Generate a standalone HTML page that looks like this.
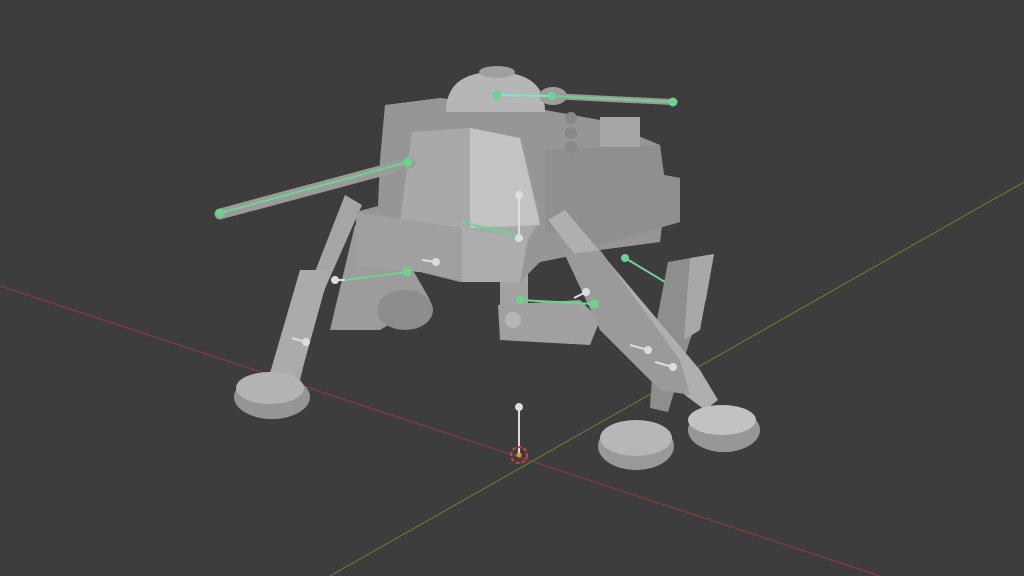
<!DOCTYPE html>
<html><head><style>
html,body{margin:0;padding:0;background:#3d3d3d;}
svg{display:block}
</style></head><body>
<svg width="1024" height="576" viewBox="0 0 1024 576" xmlns="http://www.w3.org/2000/svg">
<rect width="1024" height="576" fill="#3d3d3d"/>
<line x1="0" y1="286" x2="880" y2="576" stroke="#8a3b3e" stroke-width="1.2"/>
<line x1="330" y1="576" x2="1024" y2="182" stroke="#5f7a33" stroke-width="1.2"/>
<!-- back right fin -->
<polygon points="668,262 714,254 706,300 690,340 668,412 650,408 655,330" fill="#8e8e8e"/>
<polygon points="690,258 714,254 700,330 684,340" fill="#a8a8a8"/>
<!-- back right foot -->
<ellipse cx="636" cy="446" rx="38" ry="24" fill="#999"/>
<ellipse cx="636" cy="438" rx="36" ry="18" fill="#b7b7b7"/>
<!-- center leg -->
<rect x="500" y="235" width="28" height="90" fill="#a3a3a3"/>
<!-- left leg -->
<polygon points="345,195 362,205 320,300 300,380 280,385 300,310" fill="#a6a6a6"/>
<polygon points="355,225 390,230 430,300 380,330 330,330" fill="#9c9c9c"/>
<ellipse cx="405" cy="310" rx="28" ry="20" fill="#8d8d8d"/>
<polygon points="300,270 330,270 305,360 290,385 268,380" fill="#ababab"/>
<ellipse cx="272" cy="397" rx="38" ry="22" fill="#959595"/>
<ellipse cx="270" cy="388" rx="34" ry="16" fill="#b4b4b4"/>
<!-- main body -->
<polygon points="385,105 440,98 545,110 600,120 660,145 664,175 680,178 680,222 662,226 660,242 600,250 540,262 520,282 460,282 420,272 356,266 356,212 378,206 380,160" fill="#969696"/>
<polygon points="412,132 470,128 520,138 540,220 528,240 462,228 400,220" fill="#a9a9a9"/>
<polygon points="470,128 520,138 540,225 470,228" fill="#c3c3c3"/>
<polygon points="356,212 462,228 462,280 420,272 356,266" fill="#a0a0a0"/>
<polygon points="462,228 528,240 520,282 462,282" fill="#adadad"/>
<polygon points="545,150 660,145 664,175 680,178 680,222 600,245 545,230" fill="#8f8f8f"/>
<rect x="600" y="117" width="40" height="30" fill="#a7a7a7"/>
<!-- dome -->
<path d="M446,112 Q446,72 495,72 Q545,72 545,112 Z" fill="#b6b6b6"/>
<ellipse cx="497" cy="72" rx="18" ry="6" fill="#a0a0a0"/>
<ellipse cx="553" cy="96" rx="14" ry="9" fill="#9d9d9d"/>
<circle cx="571" cy="118" r="6" fill="#888"/><circle cx="571" cy="133" r="6" fill="#888"/><circle cx="571" cy="147" r="6" fill="#888"/>
<!-- gun barrels -->
<line x1="220" y1="214" x2="410" y2="163" stroke="#9a9a9a" stroke-width="11" stroke-linecap="round"/>
<line x1="550" y1="96" x2="673" y2="102" stroke="#9a9a9a" stroke-width="6"/>
<!-- hip block -->
<polygon points="498,305 580,300 600,320 590,345 500,340" fill="#a0a0a0"/>
<circle cx="513" cy="320" r="8" fill="#b5b5b5"/>
<!-- right front leg -->
<polygon points="548,220 565,210 700,370 718,400 705,410 685,395" fill="#afafaf"/>
<polygon points="565,255 600,250 680,360 690,395 660,390 600,330" fill="#9a9a9a"/>
<ellipse cx="724" cy="430" rx="36" ry="22" fill="#979797"/>
<ellipse cx="722" cy="420" rx="34" ry="15" fill="#c2c2c2"/>
<!-- green bones -->
<g stroke="#6ed38f" stroke-width="2" fill="#6ed38f">
<line x1="220" y1="213" x2="408" y2="162"/>
<line x1="497" y1="95" x2="550" y2="96" stroke="#7fe3d0"/>
<line x1="552" y1="96" x2="673" y2="102"/>
<line x1="462" y1="222" x2="519" y2="236"/>
<line x1="345" y1="280" x2="407" y2="272"/>
<line x1="625" y1="258" x2="665" y2="282"/>
<line x1="520" y1="300" x2="594" y2="304"/>
<circle cx="220" cy="213" r="3.5"/><circle cx="408" cy="162" r="3.5"/><circle cx="497" cy="95" r="3.5"/><circle cx="673" cy="102" r="3.5"/><circle cx="552" cy="96" r="3"/><circle cx="407" cy="272" r="3.5"/><circle cx="625" cy="258" r="3"/><circle cx="520" cy="300" r="3"/><circle cx="594" cy="304" r="3.5"/>
</g>
<g stroke="#ddd" stroke-width="2" fill="#ddd">
<line x1="519" y1="195" x2="519" y2="238"/><circle cx="519" cy="195" r="3"/><circle cx="519" cy="238" r="3"/>
<line x1="422" y1="260" x2="436" y2="262"/><circle cx="436" cy="262" r="3"/>
<line x1="292" y1="338" x2="306" y2="342"/><circle cx="306" cy="342" r="3"/>
<line x1="630" y1="345" x2="648" y2="350"/><circle cx="648" cy="350" r="3"/>
<line x1="655" y1="362" x2="673" y2="367"/><circle cx="673" cy="367" r="3"/>
<line x1="335" y1="280" x2="345" y2="280"/><circle cx="335" cy="280" r="3"/>
<line x1="574" y1="298" x2="586" y2="292"/><circle cx="586" cy="292" r="3"/>
<line x1="519" y1="407" x2="519" y2="455"/><circle cx="519" cy="407" r="3"/>
</g>
<circle cx="519" cy="455" r="8" fill="none" stroke="#c44" stroke-width="2" stroke-dasharray="4 2"/>
<circle cx="519" cy="455" r="2.5" fill="#e0a030"/>
</svg>
</body></html>
